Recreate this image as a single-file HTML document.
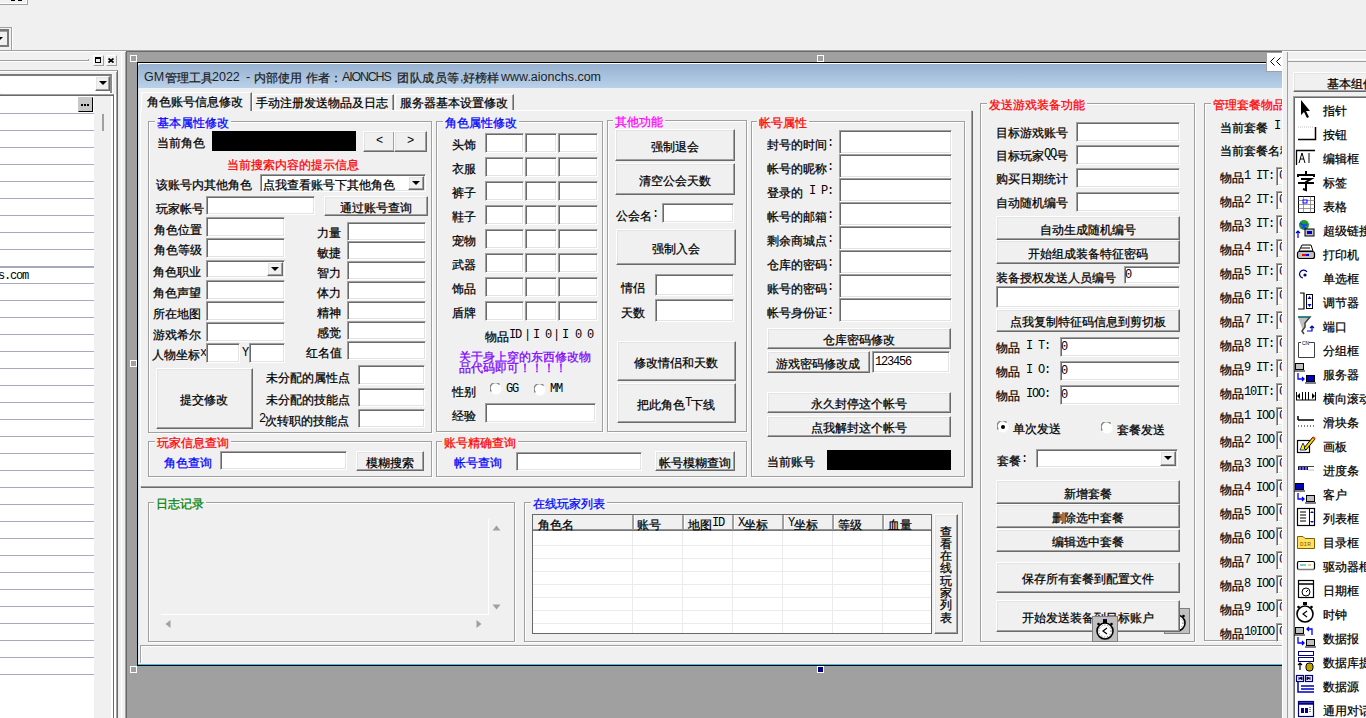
<!DOCTYPE html>
<html><head><meta charset="utf-8"><style>
@font-face{font-family:"LSX";src:local("Liberation Sans");size-adjust:150%}
html,body{margin:0;padding:0}
body{width:1366px;height:718px;overflow:hidden;position:relative;background:#f0f0f0;font-family:"Liberation Sans",sans-serif;font-size:12px}
.t{position:absolute;height:12px;line-height:12px;white-space:nowrap;font-size:12px}
.t i{font-family:"LSX","Liberation Sans",sans-serif;font-style:normal;display:inline-block;vertical-align:top;text-align:center;height:12px;line-height:12px;overflow:visible}
.t i{-webkit-text-stroke:0.25px currentColor}
.t i.a{-webkit-text-stroke:0;font-family:"Liberation Mono",monospace;font-size:12px}
.inp{position:absolute;background:#fff;border-style:solid;border-width:1px;border-color:#a0a0a0 #fff #fff #a0a0a0;box-shadow:inset 1px 1px 0 #696969,inset -1px -1px 0 #e3e3e3}
.btn{position:absolute;background:#f0f0f0;border-style:solid;border-width:1px;border-color:#fff #696969 #696969 #fff;box-shadow:inset -1px -1px 0 #a0a0a0,inset 1px 1px 0 #e3e3e3}
.grp{position:absolute;border:1px solid #a0a0a0;box-shadow:1px 1px 0 #fff,inset 1px 1px 0 #fff}
.arr{position:absolute;width:0;height:0;border-left:4px solid transparent;border-right:4px solid transparent;border-top:4px solid #000}

.tt{position:absolute;top:70px;height:14px;line-height:14px;font-size:12.5px;color:#1e1e1e;white-space:nowrap}
</style></head><body>
<div style="position:absolute;left:0px;top:-2px;width:27px;height:6px;background:#f0f0f0;border-right:1px solid #a0a0a0;border-bottom:1px solid #a0a0a0;box-shadow:inset -1px -1px 0 #fff"></div>
<div style="position:absolute;left:11px;top:0px;width:4px;height:1px;background:#000"></div>
<div style="position:absolute;left:18px;top:0px;width:4px;height:1px;background:#000"></div>
<div style="position:absolute;left:-2px;top:27px;width:13px;height:23px;border-top:1px solid #a0a0a0;border-right:1px solid #a0a0a0;box-shadow:1px 0 0 #fff"></div>
<div style="position:absolute;left:-4px;top:29px;width:13px;height:18px;background:#f0f0f0;border:2px solid #787878;box-sizing:border-box;box-shadow:inset 1px 1px 0 #a0a0a0"></div>
<div class="arr" style="left:-5px;top:37px"></div>
<div style="position:absolute;left:0px;top:50px;width:1366px;height:1px;background:#a0a0a0"></div>
<div style="position:absolute;left:0px;top:51px;width:1366px;height:1px;background:#fff"></div>
<div style="position:absolute;left:0px;top:60px;width:89px;height:1px;background:#a0a0a0"></div>
<div style="position:absolute;left:0px;top:61px;width:89px;height:1px;background:#fff"></div>
<div style="position:absolute;left:88px;top:59px;width:1px;height:2px;background:#a0a0a0"></div>
<div style="position:absolute;left:93px;top:55px;width:11px;height:11px;background:#f0f0f0;border-top:1px solid #fff;border-left:1px solid #fff;border-right:1px solid #a0a0a0;border-bottom:1px solid #a0a0a0;box-sizing:border-box"></div>
<div style="position:absolute;left:95px;top:57px;width:6px;height:6px;border:1px solid #000;border-top-width:2px;box-sizing:border-box"></div>
<div style="position:absolute;left:106px;top:55px;width:11px;height:11px;background:#f0f0f0;border-top:1px solid #fff;border-left:1px solid #fff;border-right:1px solid #a0a0a0;border-bottom:1px solid #a0a0a0;box-sizing:border-box"></div>
<svg style="position:absolute;left:108px;top:58px" width="6" height="5"><path d="M0.5 0.5L5.5 4.5M5.5 0.5L0.5 4.5" stroke="#000" stroke-width="1.7"/></svg>
<div style="position:absolute;left:0px;top:70px;width:117px;height:660px;border-right:1px solid #696969;border-top:1px solid #a0a0a0;box-shadow:inset 0 1px 0 #fff,inset -1px 0 0 #a0a0a0"></div>
<div style="position:absolute;left:0px;top:74px;width:112px;height:19px;background:#fff;border-top:2px solid #7a7a7a;border-right:2px solid #8a8a8a;box-sizing:border-box;box-shadow:1px 1px 0 #fff"></div>
<div class="btn" style="left:95px;top:76px;width:13px;height:13px"></div>
<div class="arr" style="left:99px;top:81px"></div>
<div style="position:absolute;left:0px;top:94px;width:113px;height:630px;background:#fff;border-top:1px solid #a0a0a0;border-right:1px solid #696969;box-shadow:inset 0 1px 0 #696969"></div>
<div style="position:absolute;left:114px;top:94px;width:2px;height:630px;background:#fff"></div>
<div style="position:absolute;left:94px;top:96px;width:17px;height:630px;background:#f0f0f0"></div>
<div style="position:absolute;left:102px;top:114px;width:2px;height:17px;background:#a0a0a0"></div>
<div style="position:absolute;left:0px;top:113px;width:94px;height:1px;background:#a6aabd"></div>
<div style="position:absolute;left:0px;top:130px;width:94px;height:1px;background:#a6aabd"></div>
<div style="position:absolute;left:0px;top:147px;width:94px;height:1px;background:#a6aabd"></div>
<div style="position:absolute;left:0px;top:164px;width:94px;height:1px;background:#a6aabd"></div>
<div style="position:absolute;left:0px;top:181px;width:94px;height:1px;background:#a6aabd"></div>
<div style="position:absolute;left:0px;top:198px;width:94px;height:1px;background:#a6aabd"></div>
<div style="position:absolute;left:0px;top:215px;width:94px;height:1px;background:#a6aabd"></div>
<div style="position:absolute;left:0px;top:232px;width:94px;height:1px;background:#a6aabd"></div>
<div style="position:absolute;left:0px;top:249px;width:94px;height:1px;background:#a6aabd"></div>
<div style="position:absolute;left:0px;top:266px;width:94px;height:2px;background:#a6aabd"></div>
<div style="position:absolute;left:0px;top:283px;width:94px;height:1px;background:#a6aabd"></div>
<div style="position:absolute;left:0px;top:300px;width:94px;height:1px;background:#a6aabd"></div>
<div style="position:absolute;left:0px;top:317px;width:94px;height:1px;background:#a6aabd"></div>
<div style="position:absolute;left:0px;top:334px;width:94px;height:1px;background:#a6aabd"></div>
<div style="position:absolute;left:0px;top:351px;width:94px;height:1px;background:#a6aabd"></div>
<div style="position:absolute;left:0px;top:368px;width:94px;height:1px;background:#a6aabd"></div>
<div style="position:absolute;left:0px;top:385px;width:94px;height:1px;background:#a6aabd"></div>
<div style="position:absolute;left:0px;top:402px;width:94px;height:1px;background:#a6aabd"></div>
<div style="position:absolute;left:0px;top:419px;width:94px;height:1px;background:#a6aabd"></div>
<div style="position:absolute;left:0px;top:436px;width:94px;height:1px;background:#a6aabd"></div>
<div style="position:absolute;left:0px;top:453px;width:94px;height:1px;background:#a6aabd"></div>
<div style="position:absolute;left:0px;top:470px;width:94px;height:1px;background:#a6aabd"></div>
<div style="position:absolute;left:0px;top:487px;width:94px;height:1px;background:#a6aabd"></div>
<div style="position:absolute;left:0px;top:504px;width:94px;height:1px;background:#a6aabd"></div>
<div style="position:absolute;left:0px;top:521px;width:94px;height:1px;background:#a6aabd"></div>
<div style="position:absolute;left:0px;top:538px;width:94px;height:1px;background:#a6aabd"></div>
<div style="position:absolute;left:0px;top:555px;width:94px;height:1px;background:#a6aabd"></div>
<div style="position:absolute;left:0px;top:572px;width:94px;height:1px;background:#a6aabd"></div>
<div style="position:absolute;left:0px;top:589px;width:94px;height:1px;background:#a6aabd"></div>
<div style="position:absolute;left:0px;top:606px;width:94px;height:1px;background:#a6aabd"></div>
<div style="position:absolute;left:0px;top:623px;width:94px;height:1px;background:#a6aabd"></div>
<div style="position:absolute;left:0px;top:640px;width:94px;height:1px;background:#a6aabd"></div>
<div style="position:absolute;left:0px;top:657px;width:94px;height:1px;background:#a6aabd"></div>
<div style="position:absolute;left:0px;top:674px;width:94px;height:1px;background:#a6aabd"></div>
<div class="btn" style="left:78px;top:97px;width:13px;height:13px;background:#c8c8c8;border-color:#c8c8c8 #000 #000 #c8c8c8;box-shadow:none"></div>
<div style="position:absolute;left:81px;top:104px;width:2px;height:2px;background:#000"></div>
<div style="position:absolute;left:84px;top:104px;width:2px;height:2px;background:#000"></div>
<div style="position:absolute;left:87px;top:104px;width:2px;height:2px;background:#000"></div>
<div class="t " style="left:-2px;top:270px;color:#000;"><i class="a" style="width:6px">s</i><i class="a" style="width:6px">.</i><i class="a" style="width:6px">c</i><i class="a" style="width:6px">o</i><i class="a" style="width:6px">m</i></div>
<div style="position:absolute;left:121px;top:52px;width:1px;height:666px;background:#fff"></div>
<div style="position:absolute;left:125px;top:52px;width:1px;height:666px;background:#a0a0a0"></div>
<div style="position:absolute;left:126px;top:51px;width:1px;height:667px;background:#696969"></div>
<div style="position:absolute;left:127px;top:52px;width:1155px;height:666px;background:#a0a0a0"></div>
<div style="position:absolute;left:126px;top:51px;width:1156px;height:1px;background:#696969"></div>
<div style="position:absolute;left:130px;top:55px;width:7px;height:7px;background:#a0a0a0;border:1px solid #fff;box-sizing:border-box"></div>
<div style="position:absolute;left:817px;top:55px;width:7px;height:7px;background:#a0a0a0;border:1px solid #fff;box-sizing:border-box"></div>
<div style="position:absolute;left:130px;top:360px;width:7px;height:7px;background:#a0a0a0;border:1px solid #fff;box-sizing:border-box"></div>
<div style="position:absolute;left:130px;top:666px;width:7px;height:7px;background:#a0a0a0;border:1px solid #fff;box-sizing:border-box"></div>
<div style="position:absolute;left:817px;top:666px;width:7px;height:7px;background:#000080;border:1px solid #fff;box-sizing:border-box"></div>
<div style="position:absolute;left:137px;top:62px;width:1145px;height:604px;background:#000"></div>
<div style="position:absolute;left:138px;top:63px;width:1144px;height:601px;background:#fff"></div>
<div style="position:absolute;left:138px;top:64px;width:1144px;height:600px;background:#f0f0f0"></div>
<div style="position:absolute;left:138px;top:64px;width:1144px;height:24px;background:linear-gradient(#97b1cf,#b9d1ea);border-top-left-radius:3px"></div>
<div style="position:absolute;left:138px;top:88px;width:1px;height:576px;background:#d8e6f4"></div>
<div style="position:absolute;left:138px;top:664px;width:1144px;height:1px;background:#3bbdee"></div>
<div class="tt" style="left:144px">GM</div>
<div class="t " style="left:165px;top:70px;color:#1e1e1e;"><i style="width:12px">管</i><i style="width:12px">理</i><i style="width:12px">工</i><i style="width:12px">具</i></div>
<div class="tt" style="left:212px">2022</div>
<div class="tt" style="left:246px">-</div>
<div class="t " style="left:254px;top:70px;color:#1e1e1e;"><i style="width:12px">内</i><i style="width:12px">部</i><i style="width:12px">使</i><i style="width:12px">用</i></div>
<div class="t " style="left:306px;top:70px;color:#1e1e1e;"><i style="width:12px">作</i><i style="width:12px">者</i><i style="width:12px">：</i></div>
<div class="tt" style="left:342px;letter-spacing:-1.2px">AIONCHS</div>
<div class="t " style="left:397px;top:70px;color:#1e1e1e;"><i style="width:12.5px">团</i><i style="width:12.5px">队</i><i style="width:12.5px">成</i><i style="width:12.5px">员</i><i style="width:12.5px">等</i></div>
<div class="tt" style="left:460px">,</div>
<div class="t " style="left:463px;top:70px;color:#1e1e1e;"><i style="width:12px">好</i><i style="width:12px">榜</i><i style="width:12px">样</i></div>
<div class="tt" style="left:501px">www.aionchs.com</div>
<div style="position:absolute;left:140px;top:645px;width:1142px;height:18px;border-top:1px solid #a0a0a0;border-left:1px solid #a0a0a0;box-sizing:border-box;box-shadow:inset 1px 1px 0 #fff"></div>
<div style="position:absolute;left:140px;top:110px;width:832px;height:377px;border-top:1px solid #fff;border-left:1px solid #fff;border-right:1px solid #a0a0a0;border-bottom:1px solid #a0a0a0;box-shadow:1px 1px 0 #696969;box-sizing:border-box"></div>
<div style="position:absolute;left:141px;top:92px;width:111px;height:19px;background:#f0f0f0;border-top:1px solid #fff;border-left:1px solid #fff;border-right:1px solid #696969;border-top-left-radius:2px;box-shadow:inset -1px 0 0 #a0a0a0;box-sizing:border-box"></div>
<div class="t " style="left:147px;top:94px;color:#000;"><i style="width:12px">角</i><i style="width:12px">色</i><i style="width:12px">账</i><i style="width:12px">号</i><i style="width:12px">信</i><i style="width:12px">息</i><i style="width:12px">修</i><i style="width:12px">改</i></div>
<div style="position:absolute;left:252px;top:94px;width:142px;height:16px;border-top:1px solid #fff;border-left:1px solid #fff;border-right:1px solid #696969;box-shadow:inset -1px 0 0 #a0a0a0;box-sizing:border-box"></div>
<div class="t " style="left:256px;top:95px;color:#000;"><i style="width:12px">手</i><i style="width:12px">动</i><i style="width:12px">注</i><i style="width:12px">册</i><i style="width:12px">发</i><i style="width:12px">送</i><i style="width:12px">物</i><i style="width:12px">品</i><i style="width:12px">及</i><i style="width:12px">日</i><i style="width:12px">志</i></div>
<div style="position:absolute;left:395px;top:94px;width:119px;height:16px;border-top:1px solid #fff;border-left:1px solid #fff;border-right:1px solid #696969;box-shadow:inset -1px 0 0 #a0a0a0;box-sizing:border-box"></div>
<div class="t " style="left:400px;top:95px;color:#000;"><i style="width:12px">服</i><i style="width:12px">务</i><i style="width:12px">器</i><i style="width:12px">基</i><i style="width:12px">本</i><i style="width:12px">设</i><i style="width:12px">置</i><i style="width:12px">修</i><i style="width:12px">改</i></div>
<div class="grp" style="left:148px;top:121px;width:282px;height:310px"></div>
<div style="position:absolute;left:155px;top:120px;width:76px;height:3px;background:#f0f0f0"></div>
<div class="t " style="left:157px;top:115px;color:#0000ff;"><i style="width:12px">基</i><i style="width:12px">本</i><i style="width:12px">属</i><i style="width:12px">性</i><i style="width:12px">修</i><i style="width:12px">改</i></div>
<div class="t " style="left:157px;top:135px;color:#000;"><i style="width:12px">当</i><i style="width:12px">前</i><i style="width:12px">角</i><i style="width:12px">色</i></div>
<div style="position:absolute;left:212px;top:131px;width:144px;height:20px;background:#000"></div>
<div class="btn" style="left:363px;top:131px;width:30px;height:19px"></div>
<div class="t " style="left:376px;top:135px;color:#000;"><i class="a" style="width:6px">&lt;</i></div>
<div class="btn" style="left:394px;top:131px;width:31px;height:19px"></div>
<div class="t " style="left:407px;top:135px;color:#000;"><i class="a" style="width:6px">&gt;</i></div>
<div class="t " style="left:227px;top:157px;color:#ff0000;"><i style="width:12px">当</i><i style="width:12px">前</i><i style="width:12px">搜</i><i style="width:12px">索</i><i style="width:12px">内</i><i style="width:12px">容</i><i style="width:12px">的</i><i style="width:12px">提</i><i style="width:12px">示</i><i style="width:12px">信</i><i style="width:12px">息</i></div>
<div class="t " style="left:156px;top:177px;color:#000;"><i style="width:12px">该</i><i style="width:12px">账</i><i style="width:12px">号</i><i style="width:12px">内</i><i style="width:12px">其</i><i style="width:12px">他</i><i style="width:12px">角</i><i style="width:12px">色</i></div>
<div class="inp" style="left:260px;top:174px;width:164px;height:16px"></div>
<div class="btn" style="left:408px;top:176px;width:14px;height:12px"></div>
<div class="arr" style="left:412px;top:181px"></div>
<div class="t " style="left:263px;top:177px;color:#000;"><i style="width:12px">点</i><i style="width:12px">我</i><i style="width:12px">查</i><i style="width:12px">看</i><i style="width:12px">账</i><i style="width:12px">号</i><i style="width:12px">下</i><i style="width:12px">其</i><i style="width:12px">他</i><i style="width:12px">角</i><i style="width:12px">色</i></div>
<div class="t " style="left:156px;top:201px;color:#000;"><i style="width:12px">玩</i><i style="width:12px">家</i><i style="width:12px">帐</i><i style="width:12px">号</i></div>
<div class="inp" style="left:206px;top:196px;width:107px;height:17px"></div>
<div class="btn" style="left:324px;top:196px;width:102px;height:18px"></div>
<div class="t " style="left:340px;top:200px;color:#000;"><i style="width:12px">通</i><i style="width:12px">过</i><i style="width:12px">账</i><i style="width:12px">号</i><i style="width:12px">查</i><i style="width:12px">询</i></div>
<div class="t " style="left:154px;top:222px;color:#000;"><i style="width:12px">角</i><i style="width:12px">色</i><i style="width:12px">位</i><i style="width:12px">置</i></div>
<div class="inp" style="left:206px;top:217px;width:77px;height:18px"></div>
<div class="t " style="left:154px;top:242px;color:#000;"><i style="width:12px">角</i><i style="width:12px">色</i><i style="width:12px">等</i><i style="width:12px">级</i></div>
<div class="inp" style="left:206px;top:238px;width:77px;height:18px"></div>
<div class="t " style="left:153px;top:264px;color:#000;"><i style="width:12px">角</i><i style="width:12px">色</i><i style="width:12px">职</i><i style="width:12px">业</i></div>
<div class="inp" style="left:206px;top:260px;width:77px;height:16px"></div>
<div class="btn" style="left:267px;top:262px;width:14px;height:12px"></div>
<div class="arr" style="left:271px;top:267px"></div>
<div class="t " style="left:153px;top:285px;color:#000;"><i style="width:12px">角</i><i style="width:12px">色</i><i style="width:12px">声</i><i style="width:12px">望</i></div>
<div class="inp" style="left:206px;top:280px;width:77px;height:18px"></div>
<div class="t " style="left:153px;top:306px;color:#000;"><i style="width:12px">所</i><i style="width:12px">在</i><i style="width:12px">地</i><i style="width:12px">图</i></div>
<div class="inp" style="left:206px;top:301px;width:77px;height:18px"></div>
<div class="t " style="left:153px;top:327px;color:#000;"><i style="width:12px">游</i><i style="width:12px">戏</i><i style="width:12px">希</i><i style="width:12px">尔</i></div>
<div class="inp" style="left:206px;top:322px;width:77px;height:18px"></div>
<div class="t " style="left:152px;top:347px;color:#000;"><i style="width:12px">人</i><i style="width:12px">物</i><i style="width:12px">坐</i><i style="width:12px">标</i><i class="a" style="width:6px">x</i></div>
<div class="inp" style="left:206px;top:343px;width:32px;height:18px"></div>
<div class="t " style="left:242px;top:347px;color:#000;"><i class="a" style="width:6px">Y</i></div>
<div class="inp" style="left:249px;top:343px;width:34px;height:18px"></div>
<div class="t " style="left:317px;top:225px;color:#000;"><i style="width:12px">力</i><i style="width:12px">量</i></div>
<div class="inp" style="left:347px;top:222px;width:77px;height:17px"></div>
<div class="t " style="left:317px;top:245px;color:#000;"><i style="width:12px">敏</i><i style="width:12px">捷</i></div>
<div class="inp" style="left:347px;top:241px;width:77px;height:17px"></div>
<div class="t " style="left:317px;top:265px;color:#000;"><i style="width:12px">智</i><i style="width:12px">力</i></div>
<div class="inp" style="left:347px;top:261px;width:77px;height:17px"></div>
<div class="t " style="left:317px;top:285px;color:#000;"><i style="width:12px">体</i><i style="width:12px">力</i></div>
<div class="inp" style="left:347px;top:281px;width:77px;height:17px"></div>
<div class="t " style="left:317px;top:305px;color:#000;"><i style="width:12px">精</i><i style="width:12px">神</i></div>
<div class="inp" style="left:347px;top:301px;width:77px;height:17px"></div>
<div class="t " style="left:317px;top:325px;color:#000;"><i style="width:12px">感</i><i style="width:12px">觉</i></div>
<div class="inp" style="left:347px;top:321px;width:77px;height:17px"></div>
<div class="t " style="left:306px;top:345px;color:#000;"><i style="width:12px">红</i><i style="width:12px">名</i><i style="width:12px">值</i></div>
<div class="inp" style="left:347px;top:341px;width:77px;height:17px"></div>
<div class="btn" style="left:156px;top:368px;width:95px;height:59px"></div>
<div class="t " style="left:180px;top:392px;color:#000;"><i style="width:12px">提</i><i style="width:12px">交</i><i style="width:12px">修</i><i style="width:12px">改</i></div>
<div class="t " style="left:266px;top:370px;color:#000;"><i style="width:12px">未</i><i style="width:12px">分</i><i style="width:12px">配</i><i style="width:12px">的</i><i style="width:12px">属</i><i style="width:12px">性</i><i style="width:12px">点</i></div>
<div class="t " style="left:266px;top:392px;color:#000;"><i style="width:12px">未</i><i style="width:12px">分</i><i style="width:12px">配</i><i style="width:12px">的</i><i style="width:12px">技</i><i style="width:12px">能</i><i style="width:12px">点</i></div>
<div class="t " style="left:259px;top:413px;color:#000;"><i class="a" style="width:6px">2</i><i style="width:12px">次</i><i style="width:12px">转</i><i style="width:12px">职</i><i style="width:12px">的</i><i style="width:12px">技</i><i style="width:12px">能</i><i style="width:12px">点</i></div>
<div class="inp" style="left:358px;top:365px;width:65px;height:18px"></div>
<div class="inp" style="left:358px;top:388px;width:65px;height:17px"></div>
<div class="inp" style="left:358px;top:409px;width:65px;height:17px"></div>
<div class="grp" style="left:436px;top:121px;width:165px;height:309px"></div>
<div style="position:absolute;left:443px;top:120px;width:76px;height:3px;background:#f0f0f0"></div>
<div class="t " style="left:445px;top:115px;color:#0000ff;"><i style="width:12px">角</i><i style="width:12px">色</i><i style="width:12px">属</i><i style="width:12px">性</i><i style="width:12px">修</i><i style="width:12px">改</i></div>
<div class="t " style="left:452px;top:137px;color:#000;"><i style="width:12px">头</i><i style="width:12px">饰</i></div>
<div class="inp" style="left:485px;top:133px;width:37px;height:18px"></div>
<div class="inp" style="left:525px;top:133px;width:30px;height:18px"></div>
<div class="inp" style="left:558px;top:133px;width:38px;height:18px"></div>
<div class="t " style="left:452px;top:161px;color:#000;"><i style="width:12px">衣</i><i style="width:12px">服</i></div>
<div class="inp" style="left:485px;top:157px;width:37px;height:18px"></div>
<div class="inp" style="left:525px;top:157px;width:30px;height:18px"></div>
<div class="inp" style="left:558px;top:157px;width:38px;height:18px"></div>
<div class="t " style="left:452px;top:185px;color:#000;"><i style="width:12px">裤</i><i style="width:12px">子</i></div>
<div class="inp" style="left:485px;top:181px;width:37px;height:18px"></div>
<div class="inp" style="left:525px;top:181px;width:30px;height:18px"></div>
<div class="inp" style="left:558px;top:181px;width:38px;height:18px"></div>
<div class="t " style="left:452px;top:209px;color:#000;"><i style="width:12px">鞋</i><i style="width:12px">子</i></div>
<div class="inp" style="left:485px;top:205px;width:37px;height:18px"></div>
<div class="inp" style="left:525px;top:205px;width:30px;height:18px"></div>
<div class="inp" style="left:558px;top:205px;width:38px;height:18px"></div>
<div class="t " style="left:452px;top:233px;color:#000;"><i style="width:12px">宠</i><i style="width:12px">物</i></div>
<div class="inp" style="left:485px;top:229px;width:37px;height:18px"></div>
<div class="inp" style="left:525px;top:229px;width:30px;height:18px"></div>
<div class="inp" style="left:558px;top:229px;width:38px;height:18px"></div>
<div class="t " style="left:452px;top:257px;color:#000;"><i style="width:12px">武</i><i style="width:12px">器</i></div>
<div class="inp" style="left:485px;top:253px;width:37px;height:18px"></div>
<div class="inp" style="left:525px;top:253px;width:30px;height:18px"></div>
<div class="inp" style="left:558px;top:253px;width:38px;height:18px"></div>
<div class="t " style="left:452px;top:281px;color:#000;"><i style="width:12px">饰</i><i style="width:12px">品</i></div>
<div class="inp" style="left:485px;top:277px;width:37px;height:18px"></div>
<div class="inp" style="left:525px;top:277px;width:30px;height:18px"></div>
<div class="inp" style="left:558px;top:277px;width:38px;height:18px"></div>
<div class="t " style="left:452px;top:305px;color:#000;"><i style="width:12px">盾</i><i style="width:12px">牌</i></div>
<div class="inp" style="left:485px;top:301px;width:37px;height:18px"></div>
<div class="inp" style="left:525px;top:301px;width:30px;height:18px"></div>
<div class="inp" style="left:558px;top:301px;width:38px;height:18px"></div>
<div class="t " style="left:485px;top:329px;color:#000;"><i style="width:12px">物</i><i style="width:12px">品</i><i class="a" style="width:6px">I</i><i class="a" style="width:6px">D</i></div>
<div class="t " style="left:524px;top:329px;color:#000;"><i class="a" style="width:6px">|</i></div>
<div class="t " style="left:533px;top:329px;color:#000;"><i class="a" style="width:6px">I</i></div>
<div class="t " style="left:545px;top:329px;color:#000;"><i class="a" style="width:6px">0</i></div>
<div class="t " style="left:553px;top:329px;color:#000;"><i class="a" style="width:6px">|</i></div>
<div class="t " style="left:562px;top:329px;color:#000;"><i class="a" style="width:6px">I</i></div>
<div class="t " style="left:575px;top:329px;color:#000;"><i class="a" style="width:6px">0</i></div>
<div class="t " style="left:587px;top:329px;color:#000;"><i class="a" style="width:6px">0</i></div>
<div class="t " style="left:459px;top:349px;color:#8000ff;"><i style="width:12px">关</i><i style="width:12px">于</i><i style="width:12px">身</i><i style="width:12px">上</i><i style="width:12px">穿</i><i style="width:12px">的</i><i style="width:12px">东</i><i style="width:12px">西</i><i style="width:12px">修</i><i style="width:12px">改</i><i style="width:12px">物</i></div>
<div class="t " style="left:459px;top:360px;color:#8000ff;"><i style="width:12px">品</i><i style="width:12px">代</i><i style="width:12px">码</i><i style="width:12px">即</i><i style="width:12px">可</i><i style="width:12px">！</i><i style="width:12px">！</i><i style="width:12px">！</i><i style="width:12px">！</i></div>
<div class="t " style="left:452px;top:384px;color:#000;"><i style="width:12px">性</i><i style="width:12px">别</i></div>
<div class="t " style="left:506px;top:383px;color:#000;"><i class="a" style="width:6px">G</i><i class="a" style="width:6px">G</i></div>
<div class="t " style="left:550px;top:383px;color:#000;"><i class="a" style="width:6px">M</i><i class="a" style="width:6px">M</i></div>
<div class="inp" style="left:485px;top:403px;width:109px;height:18px"></div>
<div class="t " style="left:452px;top:408px;color:#000;"><i style="width:12px">经</i><i style="width:12px">验</i></div>
<svg style="position:absolute;left:490px;top:383px" width="12" height="12"><circle cx="6" cy="6" r="5.5" fill="#fff"/><path d="M1.3 8.5A5 5 0 0 1 9.5 1.6" stroke="#808080" stroke-width="1.3" fill="none"/></svg>
<svg style="position:absolute;left:534px;top:384px" width="12" height="12"><circle cx="6" cy="6" r="5.5" fill="#fff"/><path d="M1.3 8.5A5 5 0 0 1 9.5 1.6" stroke="#808080" stroke-width="1.3" fill="none"/></svg>
<svg style="position:absolute;left:997px;top:421px" width="12" height="12"><circle cx="6" cy="6" r="5.5" fill="#fff"/><path d="M1.3 8.5A5 5 0 0 1 9.5 1.6" stroke="#808080" stroke-width="1.3" fill="none"/><circle cx="6" cy="6" r="2" fill="#000"/></svg>
<svg style="position:absolute;left:1101px;top:422px" width="12" height="12"><circle cx="6" cy="6" r="5.5" fill="#fff"/><path d="M1.3 8.5A5 5 0 0 1 9.5 1.6" stroke="#808080" stroke-width="1.3" fill="none"/></svg>
<div class="grp" style="left:607px;top:120px;width:138px;height:310px"></div>
<div style="position:absolute;left:613px;top:119px;width:52px;height:3px;background:#f0f0f0"></div>
<div class="t " style="left:615px;top:114px;color:#ff00ff;"><i style="width:12px">其</i><i style="width:12px">他</i><i style="width:12px">功</i><i style="width:12px">能</i></div>
<div class="btn" style="left:615px;top:129px;width:118px;height:30px"></div>
<div class="t " style="left:651px;top:139px;color:#000;"><i style="width:12px">强</i><i style="width:12px">制</i><i style="width:12px">退</i><i style="width:12px">会</i></div>
<div class="btn" style="left:615px;top:163px;width:118px;height:30px"></div>
<div class="t " style="left:639px;top:173px;color:#000;"><i style="width:12px">清</i><i style="width:12px">空</i><i style="width:12px">公</i><i style="width:12px">会</i><i style="width:12px">天</i><i style="width:12px">数</i></div>
<div class="t " style="left:616px;top:208px;color:#000;"><i style="width:12px">公</i><i style="width:12px">会</i><i style="width:12px">名</i><i class="a" style="width:6px">:</i></div>
<div class="inp" style="left:662px;top:203px;width:70px;height:18px"></div>
<div class="btn" style="left:616px;top:229px;width:118px;height:34px"></div>
<div class="t " style="left:652px;top:241px;color:#000;"><i style="width:12px">强</i><i style="width:12px">制</i><i style="width:12px">入</i><i style="width:12px">会</i></div>
<div class="t " style="left:621px;top:280px;color:#000;"><i style="width:12px">情</i><i style="width:12px">侣</i></div>
<div class="inp" style="left:655px;top:274px;width:77px;height:20px"></div>
<div class="t " style="left:621px;top:305px;color:#000;"><i style="width:12px">天</i><i style="width:12px">数</i></div>
<div class="inp" style="left:655px;top:299px;width:77px;height:21px"></div>
<div class="btn" style="left:617px;top:341px;width:117px;height:38px"></div>
<div class="t " style="left:634px;top:355px;color:#000;"><i style="width:12px">修</i><i style="width:12px">改</i><i style="width:12px">情</i><i style="width:12px">侣</i><i style="width:12px">和</i><i style="width:12px">天</i><i style="width:12px">数</i></div>
<div class="btn" style="left:617px;top:383px;width:117px;height:38px"></div>
<div class="t " style="left:637px;top:397px;color:#000;"><i style="width:12px">把</i><i style="width:12px">此</i><i style="width:12px">角</i><i style="width:12px">色</i><i class="a" style="width:6px">T</i><i style="width:12px">下</i><i style="width:12px">线</i></div>
<div class="grp" style="left:751px;top:121px;width:212px;height:354px"></div>
<div style="position:absolute;left:757px;top:120px;width:52px;height:3px;background:#f0f0f0"></div>
<div class="t " style="left:759px;top:115px;color:#ff0000;"><i style="width:12px">帐</i><i style="width:12px">号</i><i style="width:12px">属</i><i style="width:12px">性</i></div>
<div class="t " style="left:767px;top:137px;color:#000;"><i style="width:12px">封</i><i style="width:12px">号</i><i style="width:12px">的</i><i style="width:12px">时</i><i style="width:12px">间</i><i class="a" style="width:6px">:</i></div>
<div class="inp" style="left:839px;top:130px;width:111px;height:22px"></div>
<div class="t " style="left:767px;top:161px;color:#000;"><i style="width:12px">帐</i><i style="width:12px">号</i><i style="width:12px">的</i><i style="width:12px">昵</i><i style="width:12px">称</i><i class="a" style="width:6px">:</i></div>
<div class="inp" style="left:839px;top:154px;width:111px;height:22px"></div>
<div class="t " style="left:767px;top:185px;color:#000;"><i style="width:12px">登</i><i style="width:12px">录</i><i style="width:12px">的</i><i style="width:6px"> </i><i class="a" style="width:6px">I</i><i style="width:6px"> </i><i class="a" style="width:6px">P</i><i class="a" style="width:6px">:</i></div>
<div class="inp" style="left:839px;top:178px;width:111px;height:22px"></div>
<div class="t " style="left:767px;top:209px;color:#000;"><i style="width:12px">帐</i><i style="width:12px">号</i><i style="width:12px">的</i><i style="width:12px">邮</i><i style="width:12px">箱</i><i class="a" style="width:6px">:</i></div>
<div class="inp" style="left:839px;top:202px;width:111px;height:22px"></div>
<div class="t " style="left:767px;top:233px;color:#000;"><i style="width:12px">剩</i><i style="width:12px">余</i><i style="width:12px">商</i><i style="width:12px">城</i><i style="width:12px">点</i><i class="a" style="width:6px">:</i></div>
<div class="inp" style="left:839px;top:226px;width:111px;height:22px"></div>
<div class="t " style="left:767px;top:257px;color:#000;"><i style="width:12px">仓</i><i style="width:12px">库</i><i style="width:12px">的</i><i style="width:12px">密</i><i style="width:12px">码</i><i class="a" style="width:6px">:</i></div>
<div class="inp" style="left:839px;top:250px;width:111px;height:22px"></div>
<div class="t " style="left:767px;top:281px;color:#000;"><i style="width:12px">账</i><i style="width:12px">号</i><i style="width:12px">的</i><i style="width:12px">密</i><i style="width:12px">码</i><i class="a" style="width:6px">:</i></div>
<div class="inp" style="left:839px;top:274px;width:111px;height:22px"></div>
<div class="t " style="left:767px;top:305px;color:#000;"><i style="width:12px">帐</i><i style="width:12px">号</i><i style="width:12px">身</i><i style="width:12px">份</i><i style="width:12px">证</i><i class="a" style="width:6px">:</i></div>
<div class="inp" style="left:839px;top:298px;width:111px;height:22px"></div>
<div class="btn" style="left:767px;top:328px;width:182px;height:19px"></div>
<div class="t " style="left:823px;top:332px;color:#000;"><i style="width:12px">仓</i><i style="width:12px">库</i><i style="width:12px">密</i><i style="width:12px">码</i><i style="width:12px">修</i><i style="width:12px">改</i></div>
<div class="btn" style="left:767px;top:351px;width:101px;height:20px"></div>
<div class="t " style="left:776px;top:356px;color:#000;"><i style="width:12px">游</i><i style="width:12px">戏</i><i style="width:12px">密</i><i style="width:12px">码</i><i style="width:12px">修</i><i style="width:12px">改</i><i style="width:12px">成</i></div>
<div class="inp" style="left:872px;top:351px;width:76px;height:20px"></div>
<div class="t " style="left:875px;top:356px;color:#000;"><i class="a" style="width:6px">1</i><i class="a" style="width:6px">2</i><i class="a" style="width:6px">3</i><i class="a" style="width:6px">4</i><i class="a" style="width:6px">5</i><i class="a" style="width:6px">6</i></div>
<div class="btn" style="left:767px;top:392px;width:182px;height:19px"></div>
<div class="t " style="left:811px;top:396px;color:#000;"><i style="width:12px">永</i><i style="width:12px">久</i><i style="width:12px">封</i><i style="width:12px">停</i><i style="width:12px">这</i><i style="width:12px">个</i><i style="width:12px">帐</i><i style="width:12px">号</i></div>
<div class="btn" style="left:767px;top:416px;width:182px;height:19px"></div>
<div class="t " style="left:811px;top:420px;color:#000;"><i style="width:12px">点</i><i style="width:12px">我</i><i style="width:12px">解</i><i style="width:12px">封</i><i style="width:12px">这</i><i style="width:12px">个</i><i style="width:12px">帐</i><i style="width:12px">号</i></div>
<div class="t " style="left:767px;top:454px;color:#000;"><i style="width:12px">当</i><i style="width:12px">前</i><i style="width:12px">账</i><i style="width:12px">号</i></div>
<div style="position:absolute;left:827px;top:450px;width:124px;height:20px;background:#000"></div>
<div class="grp" style="left:148px;top:441px;width:282px;height:34px"></div>
<div style="position:absolute;left:155px;top:440px;width:76px;height:3px;background:#f0f0f0"></div>
<div class="t " style="left:157px;top:435px;color:#ff0000;"><i style="width:12px">玩</i><i style="width:12px">家</i><i style="width:12px">信</i><i style="width:12px">息</i><i style="width:12px">查</i><i style="width:12px">询</i></div>
<div class="t " style="left:164px;top:455px;color:#0000ff;"><i style="width:12px">角</i><i style="width:12px">色</i><i style="width:12px">查</i><i style="width:12px">询</i></div>
<div class="inp" style="left:220px;top:451px;width:125px;height:17px"></div>
<div class="btn" style="left:356px;top:451px;width:66px;height:18px"></div>
<div class="t " style="left:366px;top:455px;color:#000;"><i style="width:12px">模</i><i style="width:12px">糊</i><i style="width:12px">搜</i><i style="width:12px">索</i></div>
<div class="grp" style="left:436px;top:441px;width:309px;height:34px"></div>
<div style="position:absolute;left:442px;top:440px;width:76px;height:3px;background:#f0f0f0"></div>
<div class="t " style="left:444px;top:435px;color:#ff0000;"><i style="width:12px">账</i><i style="width:12px">号</i><i style="width:12px">精</i><i style="width:12px">确</i><i style="width:12px">查</i><i style="width:12px">询</i></div>
<div class="t " style="left:454px;top:455px;color:#0000ff;"><i style="width:12px">帐</i><i style="width:12px">号</i><i style="width:12px">查</i><i style="width:12px">询</i></div>
<div class="inp" style="left:516px;top:452px;width:124px;height:17px"></div>
<div class="btn" style="left:655px;top:451px;width:78px;height:18px"></div>
<div class="t " style="left:659px;top:455px;color:#000;"><i style="width:12px">帐</i><i style="width:12px">号</i><i style="width:12px">模</i><i style="width:12px">糊</i><i style="width:12px">查</i><i style="width:12px">询</i></div>
<div class="grp" style="left:148px;top:502px;width:365px;height:138px"></div>
<div style="position:absolute;left:154px;top:501px;width:52px;height:3px;background:#f0f0f0"></div>
<div class="t " style="left:156px;top:496px;color:#008000;"><i style="width:12px">日</i><i style="width:12px">志</i><i style="width:12px">记</i><i style="width:12px">录</i></div>
<div style="position:absolute;left:488px;top:519px;width:1px;height:96px;background:#fff"></div>
<div style="position:absolute;left:161px;top:614px;width:328px;height:1px;background:#fff"></div>
<svg style="position:absolute;left:490px;top:522px" width="14" height="92"><path d="M2.5 8.5L6.5 3.5L10.5 8.5Z M2.5 82.5L6.5 87.5L10.5 82.5Z" fill="#a0a0a0"/></svg>
<svg style="position:absolute;left:162px;top:617px" width="324" height="14"><path d="M8.5 3L3.5 7L8.5 11Z M314.5 3L319.5 7L314.5 11Z" fill="#a0a0a0"/></svg>
<div class="grp" style="left:524px;top:502px;width:437px;height:138px"></div>
<div style="position:absolute;left:531px;top:501px;width:76px;height:3px;background:#f0f0f0"></div>
<div class="t " style="left:533px;top:496px;color:#0000ff;"><i style="width:12px">在</i><i style="width:12px">线</i><i style="width:12px">玩</i><i style="width:12px">家</i><i style="width:12px">列</i><i style="width:12px">表</i></div>
<div style="position:absolute;left:532px;top:514px;width:400px;height:120px;background:#fff;border:1px solid #696969;box-sizing:border-box"></div>
<div style="position:absolute;left:533px;top:515px;width:398px;height:15px;background:#f0f0f0"></div>
<div style="position:absolute;left:632px;top:515px;width:2px;height:15px;background:#a0a0a0;box-shadow:1px 0 0 #fff"></div>
<div style="position:absolute;left:632px;top:530px;width:1px;height:103px;background:#ebebeb"></div>
<div style="position:absolute;left:682px;top:515px;width:2px;height:15px;background:#a0a0a0;box-shadow:1px 0 0 #fff"></div>
<div style="position:absolute;left:682px;top:530px;width:1px;height:103px;background:#ebebeb"></div>
<div style="position:absolute;left:732px;top:515px;width:2px;height:15px;background:#a0a0a0;box-shadow:1px 0 0 #fff"></div>
<div style="position:absolute;left:732px;top:530px;width:1px;height:103px;background:#ebebeb"></div>
<div style="position:absolute;left:782px;top:515px;width:2px;height:15px;background:#a0a0a0;box-shadow:1px 0 0 #fff"></div>
<div style="position:absolute;left:782px;top:530px;width:1px;height:103px;background:#ebebeb"></div>
<div style="position:absolute;left:832px;top:515px;width:2px;height:15px;background:#a0a0a0;box-shadow:1px 0 0 #fff"></div>
<div style="position:absolute;left:832px;top:530px;width:1px;height:103px;background:#ebebeb"></div>
<div style="position:absolute;left:882px;top:515px;width:2px;height:15px;background:#a0a0a0;box-shadow:1px 0 0 #fff"></div>
<div style="position:absolute;left:882px;top:530px;width:1px;height:103px;background:#ebebeb"></div>
<div style="position:absolute;left:533px;top:529px;width:398px;height:2px;background:linear-gradient(#a0a0a0,#696969)"></div>
<div style="position:absolute;left:533px;top:545px;width:398px;height:1px;background:#ebebeb"></div>
<div style="position:absolute;left:533px;top:558px;width:398px;height:1px;background:#ebebeb"></div>
<div style="position:absolute;left:533px;top:571px;width:398px;height:1px;background:#ebebeb"></div>
<div style="position:absolute;left:533px;top:584px;width:398px;height:1px;background:#ebebeb"></div>
<div style="position:absolute;left:533px;top:597px;width:398px;height:1px;background:#ebebeb"></div>
<div style="position:absolute;left:533px;top:610px;width:398px;height:1px;background:#ebebeb"></div>
<div style="position:absolute;left:533px;top:623px;width:398px;height:1px;background:#ebebeb"></div>
<div class="t " style="left:538px;top:517px;color:#000;"><i style="width:12px">角</i><i style="width:12px">色</i><i style="width:12px">名</i></div>
<div class="t " style="left:637px;top:517px;color:#000;"><i style="width:12px">账</i><i style="width:12px">号</i></div>
<div class="t " style="left:688px;top:517px;color:#000;"><i style="width:12px">地</i><i style="width:12px">图</i><i class="a" style="width:6px">I</i><i class="a" style="width:6px">D</i></div>
<div class="t " style="left:738px;top:517px;color:#000;"><i class="a" style="width:6px">X</i><i style="width:12px">坐</i><i style="width:12px">标</i></div>
<div class="t " style="left:788px;top:517px;color:#000;"><i class="a" style="width:6px">Y</i><i style="width:12px">坐</i><i style="width:12px">标</i></div>
<div class="t " style="left:838px;top:517px;color:#000;"><i style="width:12px">等</i><i style="width:12px">级</i></div>
<div class="t " style="left:888px;top:517px;color:#000;"><i style="width:12px">血</i><i style="width:12px">量</i></div>
<div class="btn" style="left:934px;top:514px;width:22px;height:118px"></div>
<div class="t " style="left:940px;top:524px;color:#000;"><i style="width:12px">查</i></div>
<div class="t " style="left:940px;top:536px;color:#000;"><i style="width:12px">看</i></div>
<div class="t " style="left:940px;top:548px;color:#000;"><i style="width:12px">在</i></div>
<div class="t " style="left:940px;top:560px;color:#000;"><i style="width:12px">线</i></div>
<div class="t " style="left:940px;top:573px;color:#000;"><i style="width:12px">玩</i></div>
<div class="t " style="left:940px;top:585px;color:#000;"><i style="width:12px">家</i></div>
<div class="t " style="left:940px;top:597px;color:#000;"><i style="width:12px">列</i></div>
<div class="t " style="left:940px;top:610px;color:#000;"><i style="width:12px">表</i></div>
<div class="grp" style="left:980px;top:103px;width:213px;height:537px"></div>
<div style="position:absolute;left:987px;top:102px;width:100px;height:3px;background:#f0f0f0"></div>
<div class="t " style="left:989px;top:97px;color:#ff0000;"><i style="width:12px">发</i><i style="width:12px">送</i><i style="width:12px">游</i><i style="width:12px">戏</i><i style="width:12px">装</i><i style="width:12px">备</i><i style="width:12px">功</i><i style="width:12px">能</i></div>
<div class="t " style="left:996px;top:125px;color:#000;"><i style="width:12px">目</i><i style="width:12px">标</i><i style="width:12px">游</i><i style="width:12px">戏</i><i style="width:12px">账</i><i style="width:12px">号</i></div>
<div class="inp" style="left:1076px;top:122px;width:102px;height:18px"></div>
<div class="t " style="left:996px;top:148px;color:#000;"><i style="width:12px">目</i><i style="width:12px">标</i><i style="width:12px">玩</i><i style="width:12px">家</i><i class="a" style="width:6px">Q</i><i class="a" style="width:6px">Q</i><i style="width:12px">号</i></div>
<div class="inp" style="left:1076px;top:145px;width:102px;height:18px"></div>
<div class="t " style="left:996px;top:171px;color:#000;"><i style="width:12px">购</i><i style="width:12px">买</i><i style="width:12px">日</i><i style="width:12px">期</i><i style="width:12px">统</i><i style="width:12px">计</i></div>
<div class="inp" style="left:1076px;top:168px;width:102px;height:18px"></div>
<div class="t " style="left:996px;top:195px;color:#000;"><i style="width:12px">自</i><i style="width:12px">动</i><i style="width:12px">随</i><i style="width:12px">机</i><i style="width:12px">编</i><i style="width:12px">号</i></div>
<div class="inp" style="left:1076px;top:192px;width:102px;height:18px"></div>
<div class="btn" style="left:996px;top:216px;width:182px;height:22px"></div>
<div class="t " style="left:1040px;top:222px;color:#000;"><i style="width:12px">自</i><i style="width:12px">动</i><i style="width:12px">生</i><i style="width:12px">成</i><i style="width:12px">随</i><i style="width:12px">机</i><i style="width:12px">编</i><i style="width:12px">号</i></div>
<div class="btn" style="left:996px;top:240px;width:182px;height:22px"></div>
<div class="t " style="left:1028px;top:246px;color:#000;"><i style="width:12px">开</i><i style="width:12px">始</i><i style="width:12px">组</i><i style="width:12px">成</i><i style="width:12px">装</i><i style="width:12px">备</i><i style="width:12px">特</i><i style="width:12px">征</i><i style="width:12px">密</i><i style="width:12px">码</i></div>
<div class="t " style="left:996px;top:270px;color:#000;"><i style="width:12px">装</i><i style="width:12px">备</i><i style="width:12px">授</i><i style="width:12px">权</i><i style="width:12px">发</i><i style="width:12px">送</i><i style="width:12px">人</i><i style="width:12px">员</i><i style="width:12px">编</i><i style="width:12px">号</i></div>
<div class="inp" style="left:1124px;top:266px;width:54px;height:16px"></div>
<div class="t " style="left:1125px;top:269px;color:#000;"><i class="a" style="width:6px">0</i></div>
<div class="inp" style="left:996px;top:286px;width:182px;height:20px"></div>
<div class="btn" style="left:996px;top:309px;width:182px;height:21px"></div>
<div class="t " style="left:1010px;top:314px;color:#000;"><i style="width:12px">点</i><i style="width:12px">我</i><i style="width:12px">复</i><i style="width:12px">制</i><i style="width:12px">特</i><i style="width:12px">征</i><i style="width:12px">码</i><i style="width:12px">信</i><i style="width:12px">息</i><i style="width:12px">到</i><i style="width:12px">剪</i><i style="width:12px">切</i><i style="width:12px">板</i></div>
<div class="t " style="left:996px;top:340px;color:#000;"><i style="width:12px">物</i><i style="width:12px">品</i><i style="width:6px"> </i><i class="a" style="width:6px">I</i><i style="width:6px"> </i><i class="a" style="width:6px">T</i><i class="a" style="width:6px">:</i></div>
<div class="inp" style="left:1060px;top:337px;width:118px;height:18px"></div>
<div class="t " style="left:1061px;top:341px;color:#000;"><i class="a" style="width:6px">0</i></div>
<div class="t " style="left:996px;top:364px;color:#000;"><i style="width:12px">物</i><i style="width:12px">品</i><i style="width:6px"> </i><i class="a" style="width:6px">I</i><i style="width:6px"> </i><i class="a" style="width:6px">O</i><i class="a" style="width:6px">:</i></div>
<div class="inp" style="left:1060px;top:361px;width:118px;height:18px"></div>
<div class="t " style="left:1061px;top:365px;color:#000;"><i class="a" style="width:6px">0</i></div>
<div class="t " style="left:996px;top:388px;color:#000;"><i style="width:12px">物</i><i style="width:12px">品</i><i style="width:6px"> </i><i class="a" style="width:6px">I</i><i class="a" style="width:6px">O</i><i class="a" style="width:6px">O</i><i class="a" style="width:6px">:</i></div>
<div class="inp" style="left:1060px;top:385px;width:118px;height:18px"></div>
<div class="t " style="left:1061px;top:389px;color:#000;"><i class="a" style="width:6px">0</i></div>
<div class="t " style="left:1013px;top:421px;color:#000;"><i style="width:12px">单</i><i style="width:12px">次</i><i style="width:12px">发</i><i style="width:12px">送</i></div>
<div class="t " style="left:1117px;top:422px;color:#000;"><i style="width:12px">套</i><i style="width:12px">餐</i><i style="width:12px">发</i><i style="width:12px">送</i></div>
<div class="t " style="left:997px;top:453px;color:#000;"><i style="width:12px">套</i><i style="width:12px">餐</i><i class="a" style="width:6px">:</i></div>
<div class="inp" style="left:1036px;top:449px;width:140px;height:17px"></div>
<div class="btn" style="left:1160px;top:451px;width:14px;height:13px"></div>
<div class="arr" style="left:1164px;top:456px"></div>
<div class="btn" style="left:996px;top:480px;width:182px;height:22px"></div>
<div class="t " style="left:1064px;top:486px;color:#000;"><i style="width:12px">新</i><i style="width:12px">增</i><i style="width:12px">套</i><i style="width:12px">餐</i></div>
<div class="btn" style="left:996px;top:504px;width:182px;height:22px"></div>
<div class="t " style="left:1052px;top:510px;color:#000;"><i style="width:12px">删</i><i style="width:12px">除</i><i style="width:12px">选</i><i style="width:12px">中</i><i style="width:12px">套</i><i style="width:12px">餐</i></div>
<div class="btn" style="left:996px;top:529px;width:182px;height:21px"></div>
<div class="t " style="left:1052px;top:534px;color:#000;"><i style="width:12px">编</i><i style="width:12px">辑</i><i style="width:12px">选</i><i style="width:12px">中</i><i style="width:12px">套</i><i style="width:12px">餐</i></div>
<div class="btn" style="left:996px;top:562px;width:182px;height:29px"></div>
<div class="t " style="left:1022px;top:571px;color:#000;"><i style="width:12px">保</i><i style="width:12px">存</i><i style="width:12px">所</i><i style="width:12px">有</i><i style="width:12px">套</i><i style="width:12px">餐</i><i style="width:12px">到</i><i style="width:12px">配</i><i style="width:12px">置</i><i style="width:12px">文</i><i style="width:12px">件</i></div>
<div style="position:absolute;left:1164px;top:608px;width:26px;height:26px;background:#c0c0c0;border:1px solid #808080;box-sizing:border-box"></div>
<svg style="position:absolute;left:1164px;top:608px" width="26" height="26"><circle cx="13" cy="15" r="8" fill="#fff" stroke="#000" stroke-width="1.6"/><circle cx="13" cy="15" r="6" fill="none" stroke="#000" stroke-width="0.6" stroke-dasharray="1 2"/><path d="M15 12L11 15L15 18" stroke="#000" stroke-width="1.2" fill="none"/><rect x="11" y="3" width="4" height="4" fill="#000"/><rect x="12" y="3" width="2" height="1" fill="#0000c0"/><circle cx="6.5" cy="8" r="1.3" fill="#000"/><circle cx="19.5" cy="8" r="1.3" fill="#000"/></svg>
<div class="btn" style="left:996px;top:600px;width:182px;height:30px"></div>
<div class="t " style="left:1022px;top:610px;color:#000;"><i style="width:12px">开</i><i style="width:12px">始</i><i style="width:12px">发</i><i style="width:12px">送</i><i style="width:12px">装</i><i style="width:12px">备</i><i style="width:12px">到</i><i style="width:12px">目</i><i style="width:12px">标</i><i style="width:12px">账</i><i style="width:12px">户</i></div>
<div style="position:absolute;left:1092px;top:616px;width:26px;height:26px;background:#c0c0c0;border:1px solid #808080;box-sizing:border-box"></div>
<svg style="position:absolute;left:1092px;top:616px" width="26" height="26"><circle cx="13" cy="15" r="8" fill="#fff" stroke="#000" stroke-width="1.6"/><circle cx="13" cy="15" r="6" fill="none" stroke="#000" stroke-width="0.6" stroke-dasharray="1 2"/><path d="M15 12L11 15L15 18" stroke="#000" stroke-width="1.2" fill="none"/><rect x="11" y="3" width="4" height="4" fill="#000"/><rect x="12" y="3" width="2" height="1" fill="#0000c0"/><circle cx="6.5" cy="8" r="1.3" fill="#000"/><circle cx="19.5" cy="8" r="1.3" fill="#000"/></svg>
<div class="grp" style="left:1204px;top:103px;width:95px;height:536px"></div>
<div style="position:absolute;left:1211px;top:102px;width:76px;height:3px;background:#f0f0f0"></div>
<div class="t " style="left:1213px;top:97px;color:#ff0000;"><i style="width:12px">管</i><i style="width:12px">理</i><i style="width:12px">套</i><i style="width:12px">餐</i><i style="width:12px">物</i><i style="width:12px">品</i></div>
<div class="t " style="left:1220px;top:120px;color:#000;"><i style="width:12px">当</i><i style="width:12px">前</i><i style="width:12px">套</i><i style="width:12px">餐</i><i style="width:6px"> </i><i class="a" style="width:6px">I</i></div>
<div class="t " style="left:1220px;top:143px;color:#000;"><i style="width:12px">当</i><i style="width:12px">前</i><i style="width:12px">套</i><i style="width:12px">餐</i><i style="width:12px">名</i><i style="width:12px">称</i></div>
<div class="t " style="left:1220px;top:170px;color:#000;"><i style="width:12px">物</i><i style="width:12px">品</i><i class="a" style="width:6px">1</i><i style="width:6px"> </i><i class="a" style="width:6px">I</i><i class="a" style="width:6px">T</i><i class="a" style="width:6px">:</i></div>
<div class="inp" style="left:1276px;top:167px;width:22px;height:17px"></div>
<div class="t " style="left:1279px;top:170px;color:#000;"><i class="a" style="width:6px">0</i></div>
<div class="t " style="left:1220px;top:194px;color:#000;"><i style="width:12px">物</i><i style="width:12px">品</i><i class="a" style="width:6px">2</i><i style="width:6px"> </i><i class="a" style="width:6px">I</i><i class="a" style="width:6px">T</i><i class="a" style="width:6px">:</i></div>
<div class="inp" style="left:1276px;top:191px;width:22px;height:17px"></div>
<div class="t " style="left:1279px;top:194px;color:#000;"><i class="a" style="width:6px">0</i></div>
<div class="t " style="left:1220px;top:218px;color:#000;"><i style="width:12px">物</i><i style="width:12px">品</i><i class="a" style="width:6px">3</i><i style="width:6px"> </i><i class="a" style="width:6px">I</i><i class="a" style="width:6px">T</i><i class="a" style="width:6px">:</i></div>
<div class="inp" style="left:1276px;top:215px;width:22px;height:17px"></div>
<div class="t " style="left:1279px;top:218px;color:#000;"><i class="a" style="width:6px">0</i></div>
<div class="t " style="left:1220px;top:242px;color:#000;"><i style="width:12px">物</i><i style="width:12px">品</i><i class="a" style="width:6px">4</i><i style="width:6px"> </i><i class="a" style="width:6px">I</i><i class="a" style="width:6px">T</i><i class="a" style="width:6px">:</i></div>
<div class="inp" style="left:1276px;top:239px;width:22px;height:17px"></div>
<div class="t " style="left:1279px;top:242px;color:#000;"><i class="a" style="width:6px">0</i></div>
<div class="t " style="left:1220px;top:266px;color:#000;"><i style="width:12px">物</i><i style="width:12px">品</i><i class="a" style="width:6px">5</i><i style="width:6px"> </i><i class="a" style="width:6px">I</i><i class="a" style="width:6px">T</i><i class="a" style="width:6px">:</i></div>
<div class="inp" style="left:1276px;top:263px;width:22px;height:17px"></div>
<div class="t " style="left:1279px;top:266px;color:#000;"><i class="a" style="width:6px">0</i></div>
<div class="t " style="left:1220px;top:290px;color:#000;"><i style="width:12px">物</i><i style="width:12px">品</i><i class="a" style="width:6px">6</i><i style="width:6px"> </i><i class="a" style="width:6px">I</i><i class="a" style="width:6px">T</i><i class="a" style="width:6px">:</i></div>
<div class="inp" style="left:1276px;top:287px;width:22px;height:17px"></div>
<div class="t " style="left:1279px;top:290px;color:#000;"><i class="a" style="width:6px">0</i></div>
<div class="t " style="left:1220px;top:314px;color:#000;"><i style="width:12px">物</i><i style="width:12px">品</i><i class="a" style="width:6px">7</i><i style="width:6px"> </i><i class="a" style="width:6px">I</i><i class="a" style="width:6px">T</i><i class="a" style="width:6px">:</i></div>
<div class="inp" style="left:1276px;top:311px;width:22px;height:17px"></div>
<div class="t " style="left:1279px;top:314px;color:#000;"><i class="a" style="width:6px">0</i></div>
<div class="t " style="left:1220px;top:338px;color:#000;"><i style="width:12px">物</i><i style="width:12px">品</i><i class="a" style="width:6px">8</i><i style="width:6px"> </i><i class="a" style="width:6px">I</i><i class="a" style="width:6px">T</i><i class="a" style="width:6px">:</i></div>
<div class="inp" style="left:1276px;top:335px;width:22px;height:17px"></div>
<div class="t " style="left:1279px;top:338px;color:#000;"><i class="a" style="width:6px">0</i></div>
<div class="t " style="left:1220px;top:362px;color:#000;"><i style="width:12px">物</i><i style="width:12px">品</i><i class="a" style="width:6px">9</i><i style="width:6px"> </i><i class="a" style="width:6px">I</i><i class="a" style="width:6px">T</i><i class="a" style="width:6px">:</i></div>
<div class="inp" style="left:1276px;top:359px;width:22px;height:17px"></div>
<div class="t " style="left:1279px;top:362px;color:#000;"><i class="a" style="width:6px">0</i></div>
<div class="t " style="left:1220px;top:386px;color:#000;"><i style="width:12px">物</i><i style="width:12px">品</i><i class="a" style="width:6px">1</i><i class="a" style="width:6px">0</i><i class="a" style="width:6px">I</i><i class="a" style="width:6px">T</i><i class="a" style="width:6px">:</i></div>
<div class="inp" style="left:1276px;top:383px;width:22px;height:17px"></div>
<div class="t " style="left:1279px;top:386px;color:#000;"><i class="a" style="width:6px">0</i></div>
<div class="t " style="left:1220px;top:410px;color:#000;"><i style="width:12px">物</i><i style="width:12px">品</i><i class="a" style="width:6px">1</i><i style="width:6px"> </i><i class="a" style="width:6px">I</i><i class="a" style="width:6px">O</i><i class="a" style="width:6px">O</i></div>
<div class="inp" style="left:1276px;top:407px;width:22px;height:17px"></div>
<div class="t " style="left:1279px;top:410px;color:#000;"><i class="a" style="width:6px">0</i></div>
<div class="t " style="left:1220px;top:434px;color:#000;"><i style="width:12px">物</i><i style="width:12px">品</i><i class="a" style="width:6px">2</i><i style="width:6px"> </i><i class="a" style="width:6px">I</i><i class="a" style="width:6px">O</i><i class="a" style="width:6px">O</i></div>
<div class="inp" style="left:1276px;top:431px;width:22px;height:17px"></div>
<div class="t " style="left:1279px;top:434px;color:#000;"><i class="a" style="width:6px">0</i></div>
<div class="t " style="left:1220px;top:458px;color:#000;"><i style="width:12px">物</i><i style="width:12px">品</i><i class="a" style="width:6px">3</i><i style="width:6px"> </i><i class="a" style="width:6px">I</i><i class="a" style="width:6px">O</i><i class="a" style="width:6px">O</i></div>
<div class="inp" style="left:1276px;top:455px;width:22px;height:17px"></div>
<div class="t " style="left:1279px;top:458px;color:#000;"><i class="a" style="width:6px">0</i></div>
<div class="t " style="left:1220px;top:482px;color:#000;"><i style="width:12px">物</i><i style="width:12px">品</i><i class="a" style="width:6px">4</i><i style="width:6px"> </i><i class="a" style="width:6px">I</i><i class="a" style="width:6px">O</i><i class="a" style="width:6px">O</i></div>
<div class="inp" style="left:1276px;top:479px;width:22px;height:17px"></div>
<div class="t " style="left:1279px;top:482px;color:#000;"><i class="a" style="width:6px">0</i></div>
<div class="t " style="left:1220px;top:506px;color:#000;"><i style="width:12px">物</i><i style="width:12px">品</i><i class="a" style="width:6px">5</i><i style="width:6px"> </i><i class="a" style="width:6px">I</i><i class="a" style="width:6px">O</i><i class="a" style="width:6px">O</i></div>
<div class="inp" style="left:1276px;top:503px;width:22px;height:17px"></div>
<div class="t " style="left:1279px;top:506px;color:#000;"><i class="a" style="width:6px">0</i></div>
<div class="t " style="left:1220px;top:530px;color:#000;"><i style="width:12px">物</i><i style="width:12px">品</i><i class="a" style="width:6px">6</i><i style="width:6px"> </i><i class="a" style="width:6px">I</i><i class="a" style="width:6px">O</i><i class="a" style="width:6px">O</i></div>
<div class="inp" style="left:1276px;top:527px;width:22px;height:17px"></div>
<div class="t " style="left:1279px;top:530px;color:#000;"><i class="a" style="width:6px">0</i></div>
<div class="t " style="left:1220px;top:554px;color:#000;"><i style="width:12px">物</i><i style="width:12px">品</i><i class="a" style="width:6px">7</i><i style="width:6px"> </i><i class="a" style="width:6px">I</i><i class="a" style="width:6px">O</i><i class="a" style="width:6px">O</i></div>
<div class="inp" style="left:1276px;top:551px;width:22px;height:17px"></div>
<div class="t " style="left:1279px;top:554px;color:#000;"><i class="a" style="width:6px">0</i></div>
<div class="t " style="left:1220px;top:578px;color:#000;"><i style="width:12px">物</i><i style="width:12px">品</i><i class="a" style="width:6px">8</i><i style="width:6px"> </i><i class="a" style="width:6px">I</i><i class="a" style="width:6px">O</i><i class="a" style="width:6px">O</i></div>
<div class="inp" style="left:1276px;top:575px;width:22px;height:17px"></div>
<div class="t " style="left:1279px;top:578px;color:#000;"><i class="a" style="width:6px">0</i></div>
<div class="t " style="left:1220px;top:602px;color:#000;"><i style="width:12px">物</i><i style="width:12px">品</i><i class="a" style="width:6px">9</i><i style="width:6px"> </i><i class="a" style="width:6px">I</i><i class="a" style="width:6px">O</i><i class="a" style="width:6px">O</i></div>
<div class="inp" style="left:1276px;top:599px;width:22px;height:17px"></div>
<div class="t " style="left:1279px;top:602px;color:#000;"><i class="a" style="width:6px">0</i></div>
<div class="t " style="left:1220px;top:626px;color:#000;"><i style="width:12px">物</i><i style="width:12px">品</i><i class="a" style="width:6px">1</i><i class="a" style="width:6px">0</i><i class="a" style="width:6px">I</i><i class="a" style="width:6px">O</i><i class="a" style="width:6px">O</i></div>
<div class="inp" style="left:1276px;top:623px;width:22px;height:17px"></div>
<div class="t " style="left:1279px;top:626px;color:#000;"><i class="a" style="width:6px">0</i></div>
<div style="position:absolute;left:1282px;top:52px;width:84px;height:666px;background:#f0f0f0"></div>
<div style="position:absolute;left:1266px;top:53px;width:16px;height:19px;background:#fff;border-left:1px solid #a0a0a0;border-bottom:1px solid #a0a0a0;box-sizing:border-box"></div>
<svg style="position:absolute;left:1269px;top:57px" width="13" height="10"><path d="M5.5 0.5L1.5 4.5L5.5 8.5M11.5 0.5L7.5 4.5L11.5 8.5" stroke="#000" stroke-width="1" fill="none"/></svg>
<div style="position:absolute;left:1282px;top:52px;width:1px;height:666px;background:#fff"></div>
<div style="position:absolute;left:1287px;top:52px;width:1px;height:666px;background:#a0a0a0"></div>
<div style="position:absolute;left:1288px;top:59px;width:78px;height:1px;background:#fff"></div>
<div style="position:absolute;left:1288px;top:61px;width:78px;height:1px;background:#a0a0a0"></div>
<div class="btn" style="left:1293px;top:72px;width:80px;height:18px"></div>
<div class="t " style="left:1327px;top:76px;color:#000;"><i style="width:12px">基</i><i style="width:12px">本</i><i style="width:12px">组</i><i style="width:12px">件</i></div>
<div style="position:absolute;left:1293px;top:96px;width:80px;height:630px;background:#fff;border-top:1px solid #a0a0a0;border-left:1px solid #a0a0a0;box-shadow:inset 1px 1px 0 #696969"></div>
<div class="t " style="left:1323px;top:103px;color:#000;"><i style="width:12px">指</i><i style="width:12px">针</i></div>
<svg style="position:absolute;left:1294px;top:98px" width="24" height="22"><path d="M7 2L7 17L10 14L13 20L15 19L12 13L16 13Z" fill="#000"/></svg>
<div class="t " style="left:1323px;top:127px;color:#000;"><i style="width:12px">按</i><i style="width:12px">钮</i></div>
<svg style="position:absolute;left:1294px;top:122px" width="24" height="22"><path d="M4 17.5H21.5V5" stroke="#000" stroke-width="1.5" fill="none"/><path d="M4 5H20" stroke="#c0c0c0" stroke-width="1" stroke-dasharray="1 1"/></svg>
<div class="t " style="left:1323px;top:151px;color:#000;"><i style="width:12px">编</i><i style="width:12px">辑</i><i style="width:12px">框</i></div>
<svg style="position:absolute;left:1294px;top:146px" width="24" height="22"><path d="M2.5 19V4.5H21" stroke="#000" stroke-width="1.3" fill="none"/><path d="M5 17L8 7L11 17M6 13H10M15 7V17" stroke="#000" stroke-width="1" fill="none"/></svg>
<div class="t " style="left:1323px;top:175px;color:#000;"><i style="width:12px">标</i><i style="width:12px">签</i></div>
<svg style="position:absolute;left:1294px;top:170px" width="24" height="22"><path d="M12 1V4M4 7V5H20V7M7 9H17L12 12V20L9 19M4 13H20" stroke="#000" stroke-width="2" fill="none"/></svg>
<div class="t " style="left:1323px;top:199px;color:#000;"><i style="width:12px">表</i><i style="width:12px">格</i></div>
<svg style="position:absolute;left:1294px;top:194px" width="24" height="22"><rect x="4.5" y="2.5" width="16" height="16" fill="#fff" stroke="#000"/><path d="M4.5 6.5H20.5M4.5 10.5H20.5M4.5 14.5H20.5M9.5 2.5V18.5M16.5 2.5V18.5" stroke="#808080" stroke-width="0.8"/><rect x="9" y="6" width="4" height="3" fill="#fff" stroke="#0000ff"/></svg>
<div class="t " style="left:1323px;top:223px;color:#000;"><i style="width:12px">超</i><i style="width:12px">级</i><i style="width:12px">链</i><i style="width:12px">接</i></div>
<svg style="position:absolute;left:1294px;top:218px" width="24" height="22"><circle cx="10" cy="7" r="5" fill="#20a020"/><path d="M6 5Q10 9 13 6M8 10Q10 8 12 11" stroke="#2040ff" stroke-width="2" fill="none"/><rect x="11" y="11" width="9" height="7" fill="#c0c0c0" stroke="#000"/><rect x="13" y="13" width="5" height="3" fill="#0000c0"/><path d="M4 20V13M2 15L4 13L6 15" stroke="#0000c0" stroke-width="1.2" fill="none"/></svg>
<div class="t " style="left:1323px;top:247px;color:#000;"><i style="width:12px">打</i><i style="width:12px">印</i><i style="width:12px">机</i></div>
<svg style="position:absolute;left:1294px;top:242px" width="24" height="22"><path d="M5 9L8 3H17L19 9Z" fill="#fff" stroke="#000"/><rect x="3.5" y="9.5" width="17" height="7" rx="2" fill="#c0c0c0" stroke="#000" stroke-width="1.2"/><rect x="8" y="12" width="4" height="2" fill="#ff0000"/><rect x="12" y="12" width="3" height="2" fill="#0000ff"/><path d="M7 6H16" stroke="#000"/></svg>
<div class="t " style="left:1323px;top:271px;color:#000;"><i style="width:12px">单</i><i style="width:12px">选</i><i style="width:12px">框</i></div>
<svg style="position:absolute;left:1294px;top:266px" width="24" height="22"><path d="M13 6A4 4 0 1 0 9 12" stroke="#000080" stroke-width="1.2" fill="none"/><circle cx="11" cy="9" r="1.6" fill="#000080"/></svg>
<div class="t " style="left:1323px;top:295px;color:#000;"><i style="width:12px">调</i><i style="width:12px">节</i><i style="width:12px">器</i></div>
<svg style="position:absolute;left:1294px;top:290px" width="24" height="22"><path d="M4 19H10V3H6" stroke="#000" stroke-width="1.2" fill="none"/><rect x="12.5" y="4.5" width="6" height="14" fill="#fff" stroke="#000"/><path d="M13.5 9L15.5 6L17.5 9ZM13.5 14L15.5 17L17.5 14Z" fill="#0000ff"/></svg>
<div class="t " style="left:1323px;top:319px;color:#000;"><i style="width:12px">端</i><i style="width:12px">口</i></div>
<svg style="position:absolute;left:1294px;top:314px" width="24" height="22"><path d="M4 3H16L11 9V13L8 17L10 20" stroke="#404040" stroke-width="1.5" fill="#c0c0c0"/><path d="M4 3H16" stroke="#00a0a0" stroke-dasharray="1 1"/><path d="M13 17H18V12M16 14L18 12L20 14" stroke="#0000c0" stroke-width="1.2" fill="none"/></svg>
<div class="t " style="left:1323px;top:343px;color:#000;"><i style="width:12px">分</i><i style="width:12px">组</i><i style="width:12px">框</i></div>
<svg style="position:absolute;left:1294px;top:338px" width="24" height="22"><path d="M4.5 4.5V19.5H20.5V4.5H15M4.5 4.5H7" stroke="#404040" fill="none"/><text x="8" y="7" font-size="5" font-family="Liberation Sans" fill="#000">CN</text></svg>
<div class="t " style="left:1323px;top:367px;color:#000;"><i style="width:12px">服</i><i style="width:12px">务</i><i style="width:12px">器</i></div>
<svg style="position:absolute;left:1294px;top:362px" width="24" height="22"><rect x="1.5" y="1.5" width="8" height="6" fill="#c0c0c0" stroke="#000"/><path d="M0 9H11" stroke="#000"/><rect x="12.5" y="13.5" width="8" height="6" fill="#0000c0" stroke="#000"/><path d="M11 21H22" stroke="#000"/><path d="M4 11V17H10M8 15L10 17L8 19" stroke="#0000ff" stroke-width="1.3" fill="none"/></svg>
<div class="t " style="left:1323px;top:391px;color:#000;"><i style="width:12px">横</i><i style="width:12px">向</i><i style="width:12px">滚</i><i style="width:12px">动</i><i style="width:12px">条</i></div>
<svg style="position:absolute;left:1294px;top:386px" width="24" height="22"><path d="M3 10L6 7V13Z M21 10L18 7V13Z" fill="#000"/><path d="M2.5 14V6M8.5 14V6M11.5 14V6M14.5 14V6M21.5 14V6" stroke="#000"/><path d="M2 14H22" stroke="#000"/></svg>
<div class="t " style="left:1323px;top:415px;color:#000;"><i style="width:12px">滑</i><i style="width:12px">块</i><i style="width:12px">条</i></div>
<svg style="position:absolute;left:1294px;top:410px" width="24" height="22"><path d="M4 6V10M4 10H20" stroke="#000" stroke-width="1.5"/><path d="M4 16H20" stroke="#000" stroke-dasharray="1 2"/></svg>
<div class="t " style="left:1323px;top:439px;color:#000;"><i style="width:12px">画</i><i style="width:12px">板</i></div>
<svg style="position:absolute;left:1294px;top:434px" width="24" height="22"><rect x="3.5" y="6.5" width="12" height="12" fill="#fff" stroke="#000" stroke-width="1.2"/><path d="M6 16L9 9L12 16Z" fill="#ffff00" stroke="#000080" stroke-width="0.8"/><path d="M10 14L19 3L21 5L12 16Z" fill="#ffd000" stroke="#000"/><path d="M19 3L21 5" stroke="#ff4000" stroke-width="2"/></svg>
<div class="t " style="left:1323px;top:463px;color:#000;"><i style="width:12px">进</i><i style="width:12px">度</i><i style="width:12px">条</i></div>
<svg style="position:absolute;left:1294px;top:458px" width="24" height="22"><path d="M4 8.5H20" stroke="#404040"/><rect x="4" y="9" width="10" height="3" fill="#000080"/><path d="M6 9V12M9 9V12M12 9V12" stroke="#fff" stroke-width="0.8"/><path d="M14 12H20" stroke="#c0c0c0"/></svg>
<div class="t " style="left:1323px;top:487px;color:#000;"><i style="width:12px">客</i><i style="width:12px">户</i></div>
<svg style="position:absolute;left:1294px;top:482px" width="24" height="22"><rect x="1.5" y="1.5" width="8" height="6" fill="#0000c0" stroke="#000"/><path d="M0 9H11" stroke="#000"/><rect x="12.5" y="13.5" width="8" height="6" fill="#c0c0c0" stroke="#000"/><path d="M11 21H22" stroke="#000"/><path d="M4 11V17H10M8 15L10 17L8 19" stroke="#0000ff" stroke-width="1.3" fill="none"/></svg>
<div class="t " style="left:1323px;top:511px;color:#000;"><i style="width:12px">列</i><i style="width:12px">表</i><i style="width:12px">框</i></div>
<svg style="position:absolute;left:1294px;top:506px" width="24" height="22"><rect x="3.5" y="2.5" width="17" height="17" fill="#fff" stroke="#000" stroke-width="1.2"/><path d="M6 6H12M6 9H12M6 12H12M6 15H12" stroke="#000" stroke-width="1.2"/><path d="M15.5 2.5V19.5" stroke="#000"/><path d="M16 7L18 5L20 7ZM16 15L18 17L20 15Z" fill="#0000c0"/></svg>
<div class="t " style="left:1323px;top:535px;color:#000;"><i style="width:12px">目</i><i style="width:12px">录</i><i style="width:12px">框</i></div>
<svg style="position:absolute;left:1294px;top:530px" width="24" height="22"><path d="M3.5 6.5H9L11 8.5H20.5V18.5H3.5Z" fill="#ffe060" stroke="#806000"/><text x="6" y="16" font-size="6" font-family="Liberation Mono" fill="#806000">DIR</text></svg>
<div class="t " style="left:1323px;top:559px;color:#000;"><i style="width:12px">驱</i><i style="width:12px">动</i><i style="width:12px">器</i><i style="width:12px">框</i></div>
<svg style="position:absolute;left:1294px;top:554px" width="24" height="22"><rect x="3.5" y="7.5" width="17" height="8" rx="1.5" fill="#fff" stroke="#000" stroke-width="1.2"/><path d="M6 11H12" stroke="#00a0a0"/><path d="M14 11H17" stroke="#c0a000"/><path d="M4 15.5H20" stroke="#808080" stroke-width="1.5"/></svg>
<div class="t " style="left:1323px;top:583px;color:#000;"><i style="width:12px">日</i><i style="width:12px">期</i><i style="width:12px">框</i></div>
<svg style="position:absolute;left:1294px;top:578px" width="24" height="22"><rect x="4.5" y="2.5" width="15" height="17" fill="#fff" stroke="#000" stroke-width="1.2"/><path d="M4.5 6H19.5" stroke="#000" stroke-width="1.5"/><circle cx="12" cy="14" r="4" fill="none" stroke="#000"/><path d="M12 14L14 12" stroke="#000"/></svg>
<div class="t " style="left:1323px;top:607px;color:#000;"><i style="width:12px">时</i><i style="width:12px">钟</i></div>
<svg style="position:absolute;left:1294px;top:602px" width="24" height="22"><circle cx="11" cy="12" r="8" fill="#fff" stroke="#000" stroke-width="1.6"/><path d="M13 9L9 12L13 15" stroke="#000" stroke-width="1.2" fill="none"/><rect x="9" y="0" width="4" height="3" fill="#000"/><circle cx="4.5" cy="5" r="1.3" fill="#000"/><circle cx="17.5" cy="5" r="1.3" fill="#000"/></svg>
<div class="t " style="left:1323px;top:631px;color:#000;"><i style="width:12px">数</i><i style="width:12px">据</i><i style="width:12px">报</i></div>
<svg style="position:absolute;left:1294px;top:626px" width="24" height="22"><rect x="1.5" y="1.5" width="8" height="6" fill="#c0c0c0" stroke="#000"/><path d="M0 9H11" stroke="#000"/><rect x="12.5" y="13.5" width="8" height="6" fill="#c0c0c0" stroke="#000"/><path d="M11 21H22" stroke="#000"/><path d="M4 11V17H10M8 15L10 17L8 19M18 9V3H13M15 1L13 3L15 5" stroke="#0000ff" stroke-width="1.3" fill="none"/></svg>
<div class="t " style="left:1323px;top:655px;color:#000;"><i style="width:12px">数</i><i style="width:12px">据</i><i style="width:12px">库</i><i style="width:12px">提</i><i style="width:12px">供</i></div>
<svg style="position:absolute;left:1294px;top:650px" width="24" height="22"><rect x="4.5" y="1.5" width="15" height="4" fill="#fff" stroke="#000080"/><rect x="4.5" y="7.5" width="15" height="4" fill="#fff" stroke="#000080"/><path d="M6 20V13M4 15L6 13L8 15" stroke="#000" stroke-width="1.2" fill="none"/><rect x="12" y="13" width="7" height="8" rx="3" fill="#c0a000" stroke="#000"/></svg>
<div class="t " style="left:1323px;top:679px;color:#000;"><i style="width:12px">数</i><i style="width:12px">据</i><i style="width:12px">源</i></div>
<svg style="position:absolute;left:1294px;top:674px" width="24" height="22"><rect x="2.5" y="1.5" width="7" height="6" fill="#fff" stroke="#000080" stroke-width="1.2"/><rect x="11.5" y="1.5" width="7" height="6" fill="#fff" stroke="#000080" stroke-width="1.2"/><path d="M5 3V6M5 4.5L8 3V6M16 3V6M16 4.5L13 3V6" stroke="#000080"/><path d="M4 8V18H20M7 12H20M7 15H20" stroke="#0000c0" stroke-width="1.5" fill="none"/></svg>
<div class="t " style="left:1323px;top:703px;color:#000;"><i style="width:12px">通</i><i style="width:12px">用</i><i style="width:12px">对</i><i style="width:12px">话</i><i style="width:12px">框</i></div>
<svg style="position:absolute;left:1294px;top:698px" width="24" height="22"><rect x="4.5" y="3.5" width="15" height="15" fill="#fff" stroke="#000080" stroke-width="1.2"/><path d="M4.5 5.5H19.5" stroke="#000080" stroke-width="2.5"/><rect x="7" y="10" width="3" height="5" fill="#000080"/><rect x="11" y="10" width="3" height="5" fill="#000080"/><path d="M16 9V15" stroke="#000080" stroke-dasharray="1 1"/></svg>
</body></html>
